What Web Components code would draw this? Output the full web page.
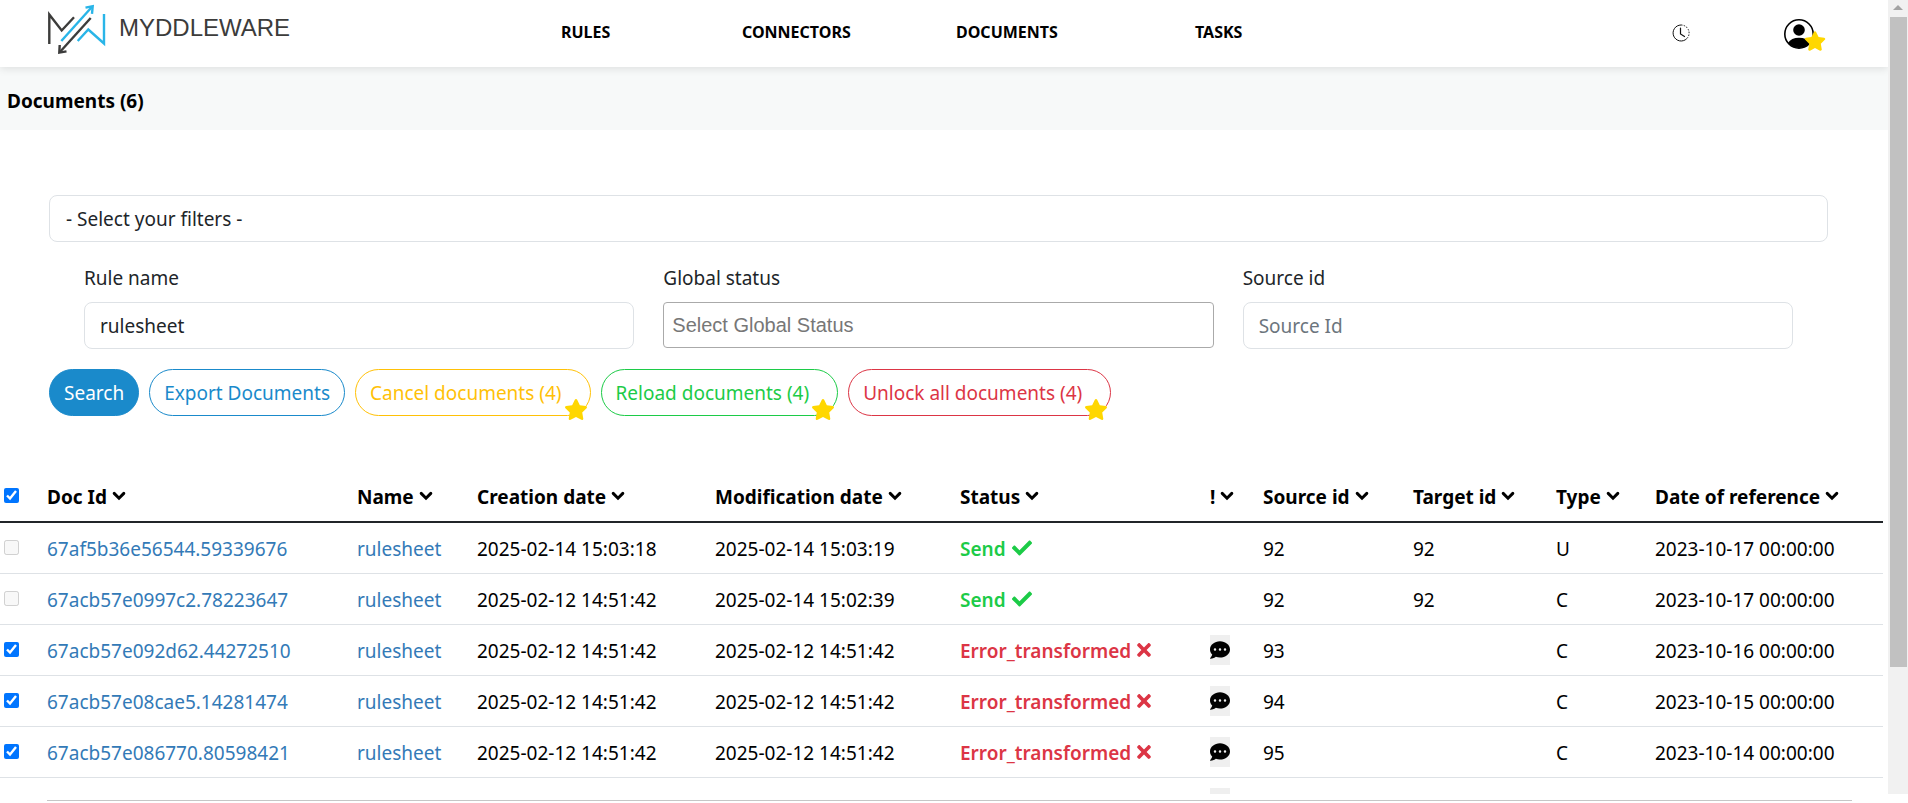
<!DOCTYPE html>
<html lang="en">
<head>
<meta charset="utf-8">
<title>Myddleware - Documents</title>
<style>
html, body { margin: 0; height: 100%; background: #fff; }
body { font: 19px/30px "Noto Sans", "Open Sans", sans-serif; color: #212529; overflow: hidden; }
</style>
</head>
<body>
<mw-app></mw-app>
<script>
const define = (name, html, setup) => {
  const template = document.createElement('template');
  template.innerHTML = '<style>*{box-sizing:border-box}</style>' + html;
  customElements.define(name, class extends HTMLElement {
    connectedCallback() {
      if (this.shadowRoot) return;
      this.attachShadow({ mode: 'open' }).append(template.content.cloneNode(true));
      if (setup) setup(this, this.shadowRoot);
    }
  });
};

const icons = {
  chevron: ['0 0 14 10', '<path d="M2.2 2.4 7 7.2l4.8-4.8" fill="none" stroke="currentColor" stroke-width="3" stroke-linecap="round"/>'],
  check: ['0 0 512 512', '<path fill="currentColor" d="M173.9 439.4 7.5 273c-10-10-10-26.200 0-36.200l36.200-36.200c10-10 26.200-10 36.200 0L192 312.700 432.100 72.600c10-10 26.200-10 36.200 0l36.200 36.200c10 10 10 26.200 0 36.200L210.100 439.400c-10 10-26.200 10-36.200 0z"/>'],
  cross: ['0 0 352 512', '<path fill="currentColor" d="m242.700 256 100.100-100.100c12.300-12.300 12.300-32.200 0-44.500l-22.200-22.200c-12.300-12.300-32.200-12.300-44.500 0L176 189.300 75.900 89.200c-12.300-12.300-32.200-12.300-44.500 0L9.200 111.500c-12.300 12.300-12.300 32.200 0 44.500L109.300 256 9.200 356.100c-12.300 12.300-12.300 32.200 0 44.500l22.200 22.200c12.300 12.300 32.200 12.300 44.500 0L176 322.700l100.100 100.100c12.300 12.300 32.200 12.300 44.500 0l22.200-22.200c12.300-12.300 12.300-32.200 0-44.500z"/>'],
  comment: ['0 0 512 512', '<path fill="currentColor" d="M256 32C114.600 32 0 125.100 0 240c0 49.600 21.400 95 57 130.700C44.500 421.100 2.700 466 2.200 466.500c-2.200 2.300-2.800 5.700-1.500 8.700S4.800 480 8 480c66.300 0 116-31.800 140.600-51.400 32.700 12.300 69 19.400 107.400 19.400 141.400 0 256-93.100 256-208S397.400 32 256 32zM128 272a32 32 0 1 1 0-64 32 32 0 0 1 0 64zm128 0a32 32 0 1 1 0-64 32 32 0 0 1 0 64zm128 0a32 32 0 1 1 0-64 32 32 0 0 1 0 64z"/>'],
  star: ['0 0 576 512', '<path fill="#ffd700" d="M259.300 17.800 194 150.200 47.900 171.500c-26.200 3.800-36.700 36.100-17.700 54.600l105.700 103-25 145.500c-4.500 26.300 23.200 46 46.400 33.700L288 439.600l130.700 68.700c23.200 12.200 50.900-7.400 46.400-33.700l-25-145.500 105.700-103c19-18.500 8.500-50.800-17.700-54.600L382 150.200 316.700 17.800c-11.700-23.600-45.600-23.900-57.400 0z"/>'],
  clock: ['0 0 18 18', '<g fill="none" stroke="#111"><path d="M9 1a8 8 0 1 0 5.700 13.700"/><path d="M9 1a8 8 0 0 1 5.700 13.700" stroke-dasharray="1.500 1.300"/><path d="M8.500 4v6l4 2.500" stroke-linecap="round" stroke-width="1.200"/></g>'],
  user: ['0 0 30 30', '<circle cx="15" cy="15" r="14.200" fill="#fff" stroke="#000" stroke-width="1.600"/><circle cx="15" cy="11" r="5.800"/><path d="M4 24C6 20.500 10 18.700 15 18.700s9 1.800 11 5.300A14.500 14.500 0 0 1 4 24z"/>']
};

define('mw-icon', `<style>
:host{display:inline-block;line-height:0}
svg{display:block;width:100%;height:100%}
</style><svg aria-hidden="true"></svg>`, (el, root) => {
  const [box, shape] = icons[el.getAttribute('name')];
  const svg = root.querySelector('svg');
  svg.setAttribute('viewBox', box);
  svg.innerHTML = shape;
});

define('mw-logo', `<style>
:host{display:block}
a{display:flex;align-items:center;gap:13px;color:#3c3c3b;text-decoration:none;font:24px/30px "Liberation Sans",Arial,sans-serif}
svg{display:block}
</style>
<a href="#"><svg width="60" height="56" viewBox="0 0 60 56" fill="none" stroke-width="2.400">
<g stroke="#3c3c3b"><path d="M3.300 44V14.500L15.700 30.500 28 17.300"/><path d="M44.700 18 13.700 52.300"/><path d="M13.700 45l-.4 7.600 7.200-1.200"/></g>
<g stroke="#29b5e8"><path d="M15.300 41 46.300 6.500"/><path d="m39.500 7.600 7.200-1.400-.7 7.600"/><path d="M31.700 41 42.300 29.500 58 43.500V14"/></g>
</svg><span>MYDDLEWARE</span></a>`);

define('mw-topbar', `<style>
:host{display:grid;grid-template-columns:46px 515px 1fr 104px;align-items:start;position:relative;z-index:1;height:67px;background:#fff;box-shadow:0 2px 8px rgba(0,0,0,.1)}
mw-logo{grid-column:2}
nav{display:grid;grid-template-columns:181px 214px 239px 477px 1fr;align-items:start}
a{color:#000;text-decoration:none;font:700 16px/30px "Noto Sans","Open Sans",sans-serif;margin-top:17px}
button{border:0;padding:0;background:none;display:block}
.clock{width:18px;height:18px;margin-top:24px}
.user{position:relative;width:30px;height:30px;margin-top:19px}
mw-icon{width:100%;height:100%}
.user .star{position:absolute;left:20px;top:12px;width:22px;height:20px}
</style>
<mw-logo></mw-logo>
<nav><a href="#">RULES</a><a href="#">CONNECTORS</a><a href="#">DOCUMENTS</a><a href="#">TASKS</a><button class="clock" aria-label="History"><mw-icon name="clock"></mw-icon></button></nav>
<button class="user" aria-label="Account"><mw-icon name="user"></mw-icon><mw-icon class="star" name="star"></mw-icon></button>`);

define('mw-title', `<style>
:host{display:block;background:#f7f9f9;padding:19px 7px 14px}
h1{margin:0;font:700 19px/30px "Noto Sans","Open Sans",sans-serif;color:#000}
</style><h1><slot></slot></h1>`);

define('mw-field', `<style>
:host{display:block}
label{display:block;margin-bottom:9px}
input{display:block;width:100%;height:47px;padding:0 15px;border:1px solid #dee2e6;border-radius:8px;font:inherit;color:#212529;background:#fff}
input::placeholder{color:#6c757d;opacity:1}
:host([plain]) input{height:46px;padding:0 8px;border-color:#aaa;border-radius:4px;font:20px/30px "Liberation Sans",Arial,sans-serif}
:host([plain]) input::placeholder{color:#777}
</style><label for="box"></label><input id="box" type="text">`, (el, root) => {
  root.querySelector('label').textContent = el.getAttribute('label');
  const input = root.querySelector('input');
  input.placeholder = el.getAttribute('placeholder') || '';
  input.value = el.getAttribute('value') || '';
});

define('mw-button', `<style>
:host{display:block;--tone:#1a8acb}
:host([tone=warning]){--tone:#ffc107}
:host([tone=success]){--tone:#1ccb47}
:host([tone=danger]){--tone:#dc3545}
button{display:block;position:relative;height:47px;padding:0 14px;border:1px solid var(--tone);border-radius:24px;background:#fff;color:var(--tone);font:inherit;white-space:nowrap}
:host([solid]) button{background:var(--tone);color:#fff}
:host([starred]) button{padding-right:28px}
mw-icon{display:none;position:absolute;right:2px;bottom:-5px;width:24px;height:21px}
:host([starred]) mw-icon{display:block}
</style><button type="button"><slot></slot><mw-icon name="star"></mw-icon></button>`);

define('mw-filters', `<style>
:host{display:block;padding:65px 60px 0 49px}
select{appearance:none;display:block;width:100%;height:47px;padding:0 16px;border:1px solid #dee2e6;border-radius:8px;background:#fff;color:#212529;font:inherit}
.fields{display:grid;grid-template-columns:repeat(3,1fr);gap:29px;padding:21px 35px 0}
.actions{display:flex;gap:10px;padding-top:20px}
</style>
<select aria-label="Filters"><option>- Select your filters -</option></select>
<div class="fields">
<mw-field label="Rule name" value="rulesheet"></mw-field>
<mw-field plain label="Global status" placeholder="Select Global Status"></mw-field>
<mw-field label="Source id" placeholder="Source Id"></mw-field>
</div>
<div class="actions">
<mw-button solid>Search</mw-button>
<mw-button>Export Documents</mw-button>
<mw-button tone="warning" starred>Cancel documents (4)</mw-button>
<mw-button tone="success" starred>Reload documents (4)</mw-button>
<mw-button tone="danger" starred>Unlock all documents (4)</mw-button>
</div>`);

const columns = [['', 43], ['Doc Id', 310], ['Name', 120], ['Creation date', 238], ['Modification date', 245], ['Status', 250], ['!', 53], ['Source id', 150], ['Target id', 143], ['Type', 99], ['Date of reference', 232]];
const rows = [
  ['67af5b36e56544.59339676', '2025-02-14 15:03:18', '2025-02-14 15:03:19', true, '92', '92', 'U', '2023-10-17 00:00:00'],
  ['67acb57e0997c2.78223647', '2025-02-12 14:51:42', '2025-02-14 15:02:39', true, '92', '92', 'C', '2023-10-17 00:00:00'],
  ['67acb57e092d62.44272510', '2025-02-12 14:51:42', '2025-02-12 14:51:42', false, '93', '', 'C', '2023-10-16 00:00:00'],
  ['67acb57e08cae5.14281474', '2025-02-12 14:51:42', '2025-02-12 14:51:42', false, '94', '', 'C', '2023-10-15 00:00:00'],
  ['67acb57e086770.80598421', '2025-02-12 14:51:42', '2025-02-12 14:51:42', false, '95', '', 'C', '2023-10-14 00:00:00']
];
const message = '<button class="note" aria-label="Message"><mw-icon name="comment"></mw-icon></button>';

define('mw-documents', `<style>
:host{display:block;padding:54px 5px 0 0;color:#000}
table{width:100%;border-collapse:collapse;table-layout:fixed}
th,td{height:51px;padding:2px 4px 0;text-align:left;vertical-align:middle;white-space:nowrap;border-bottom:1px solid #dee2e6;font-weight:400}
thead th{height:52px;font-weight:700;border-bottom:2px solid #212529}
a{color:#337ab7;text-decoration:none}
input{display:block;width:15px;height:15px;margin:0 0 3px;accent-color:#0075ff}
.sort{width:14px;height:10px;margin-left:5px;vertical-align:3px}
.ok,.ko{font-weight:600}
.ok{color:#1ccb47}.ko{color:#dc3545}
.ok mw-icon{width:20px;height:20px;margin-left:6px;vertical-align:-2px}
.ko mw-icon{width:14px;height:20px;margin-left:6px;vertical-align:-2px}
.note{display:flex;align-items:center;width:20px;height:30px;margin:0 0 2px;padding:0;border:0;background:#efefef;color:#000}
.note mw-icon{width:20px;height:20px}
</style><table><colgroup></colgroup><thead><tr></tr></thead><tbody></tbody></table>`, (el, root) => {
  const total = columns.reduce((sum, c) => sum + c[1], 0);
  root.querySelector('colgroup').innerHTML = columns.map(c => `<col style="width:${c[1] / total * 100}%">`).join('');
  root.querySelector('thead tr').innerHTML = columns.map(([name]) => name
    ? `<th scope="col">${name}<mw-icon class="sort" name="chevron"></mw-icon></th>`
    : '<th scope="col"><input type="checkbox" checked aria-label="Select all"></th>').join('');
  root.querySelector('tbody').innerHTML = rows.map(([id, created, modified, sent, source, target, type, date]) => `<tr>
<td><input type="checkbox" aria-label="Select ${id}" ${sent ? 'disabled' : 'checked'}></td>
<td><a href="#">${id}</a></td><td><a href="#">rulesheet</a></td><td>${created}</td><td>${modified}</td>
<td class="${sent ? 'ok' : 'ko'}">${sent ? 'Send' : 'Error_transformed'}<mw-icon name="${sent ? 'check' : 'cross'}"></mw-icon></td>
<td>${sent ? '' : message}</td><td>${source}</td><td>${target}</td><td>${type}</td><td>${date}</td></tr>`).join('')
    + `<tr><td colspan="6"></td><td>${message}</td><td colspan="4"></td></tr>`;
});

define('mw-scrollbar', `<style>
:host{display:flex;flex-direction:column;align-items:center;background:#f1f1f1;width:20px}
svg{flex:none;display:block}
.track{flex:1;align-self:stretch;padding:0 1px 0 2px}
.thumb{height:83.6%;background:#c1c1c1}
</style><svg width="20" height="17" viewBox="0 0 20 17"><path d="m5 10 5-5 5 5z" fill="#a3a3a3"/></svg><div class="track"><div class="thumb"></div></div>`);

define('mw-app', `<style>
:host{display:flex;flex-direction:column;height:100%}
.window{flex:1;min-height:0;display:flex;overflow:hidden}
main{flex:1;min-width:0;overflow:hidden}
footer{flex:none;height:9px;padding:6px 56px 0 47px}
hr{margin:0;border:0;border-top:1px solid #c6c6c6}
</style>
<div class="window"><main>
<mw-topbar></mw-topbar>
<mw-title>Documents (6)</mw-title>
<mw-filters></mw-filters>
<mw-documents></mw-documents>
</main><mw-scrollbar></mw-scrollbar></div>
<footer><hr></footer>`);
</script>
</body>
</html>
